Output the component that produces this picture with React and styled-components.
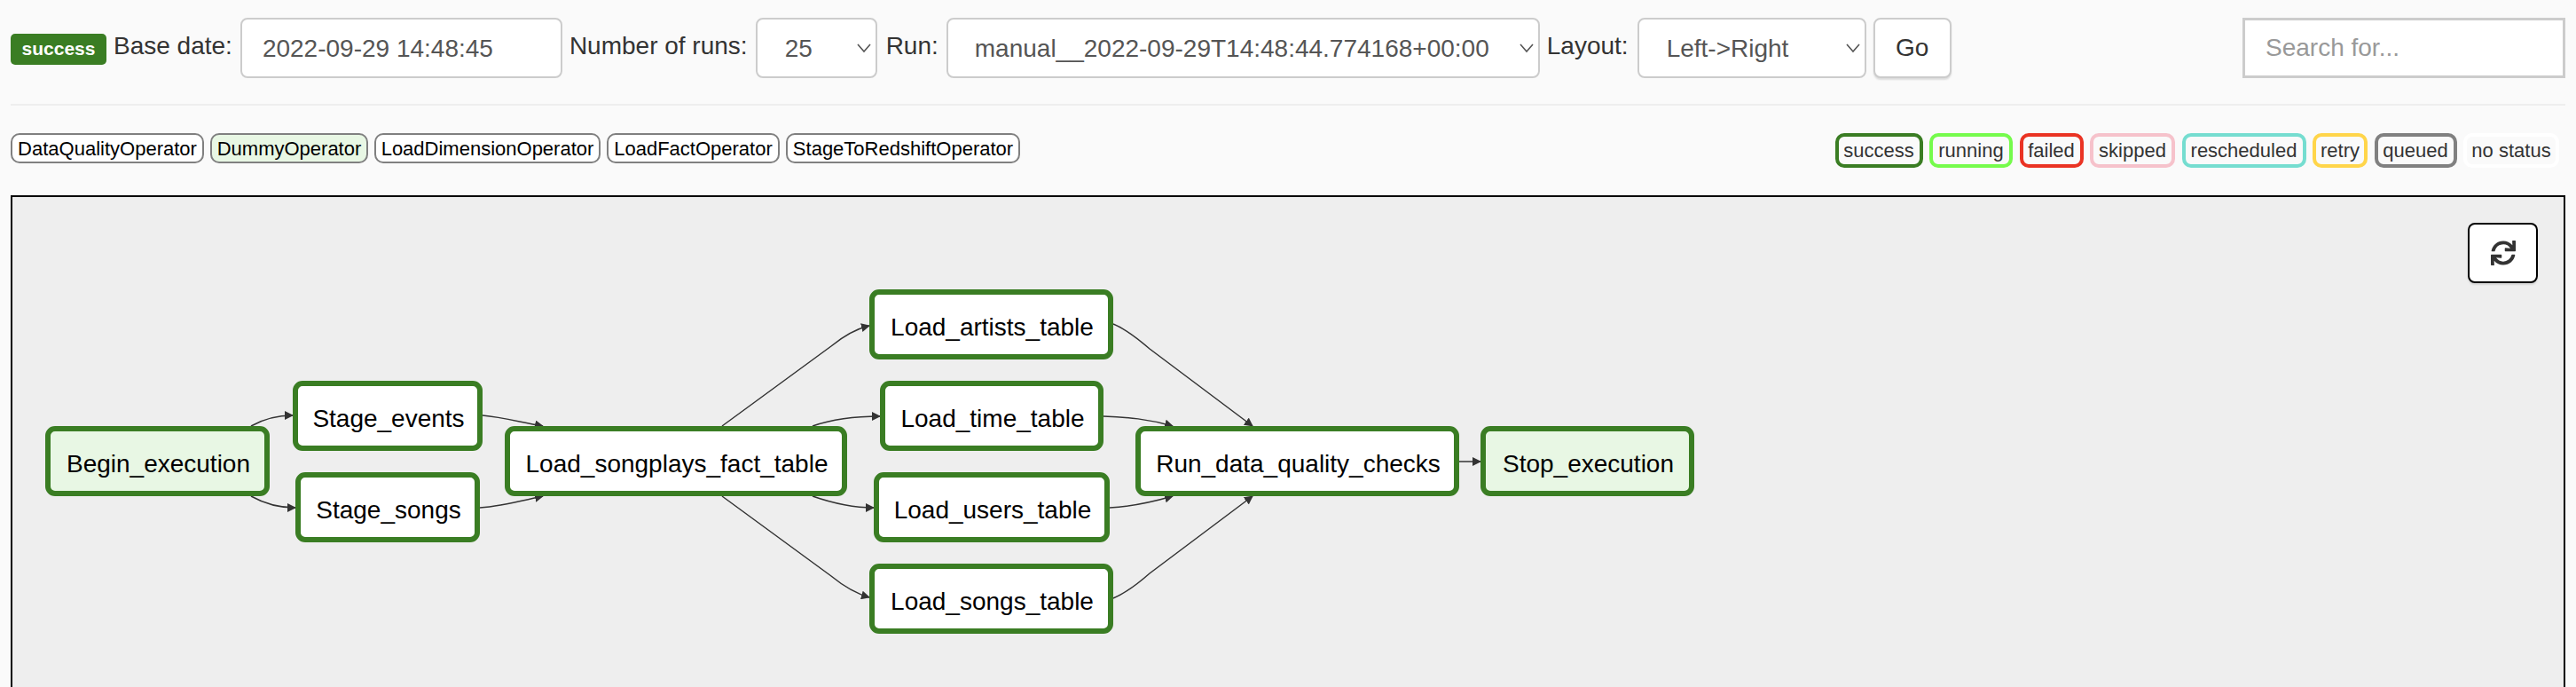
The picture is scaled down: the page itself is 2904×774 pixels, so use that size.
import React from "react";
import styled, { createGlobalStyle } from "styled-components";
import { FaSync } from "react-icons/fa";

const GREEN = "#3a7d23";

const operators = [
  { name: "DataQualityOperator", width: 218 },
  { name: "DummyOperator", width: 178, dummy: true },
  { name: "LoadDimensionOperator", width: 255 },
  { name: "LoadFactOperator", width: 195 },
  { name: "StageToRedshiftOperator", width: 264 }
];

const statuses = [
  { name: "success", color: GREEN, width: 99 },
  { name: "running", color: "#75fb4c", width: 94 },
  { name: "failed", color: "#ea3323", width: 72 },
  { name: "skipped", color: "#f6c2cb", width: 96 },
  { name: "rescheduled", color: "#75ddd0", width: 140 },
  { name: "retry", color: "#ffd54a", width: 62 },
  { name: "queued", color: "#808080", width: 93 },
  { name: "no status", color: "#ffffff", width: 108 }
];

// graph coordinates are relative to the panel's padding box (origin 14,222)
const tasks = [
  { name: "Begin_execution", x: 37, y: 258, w: 253, dummy: true },
  { name: "Stage_events", x: 316, y: 207, w: 214 },
  { name: "Stage_songs", x: 319, y: 310, w: 208 },
  { name: "Load_songplays_fact_table", x: 555, y: 258, w: 386 },
  { name: "Load_artists_table", x: 966, y: 104, w: 275 },
  { name: "Load_time_table", x: 978, y: 207, w: 252 },
  { name: "Load_users_table", x: 971, y: 310, w: 266 },
  { name: "Load_songs_table", x: 966, y: 413, w: 275 },
  { name: "Run_data_quality_checks", x: 1266, y: 258, w: 365 },
  { name: "Stop_execution", x: 1655, y: 258, w: 241, dummy: true }
];

const edges = [
  "M269 258 C285 249 302 246 316 246",
  "M269 337 C285 346 302 350 319 350",
  "M530 246 C552 248 570 253 598 258",
  "M527 350 C552 348 570 343 598 337",
  "M800 258 L923 168 Q945 150 966 145",
  "M902 258 C925 250 955 247 978 247",
  "M902 337 C925 345 950 350 971 350",
  "M800 337 L923 427 Q945 445 966 451",
  "M1241 143 Q1258 150 1282 171 L1398 258",
  "M1230 247 C1258 248 1280 250 1308 258",
  "M1237 350 C1258 349 1280 345 1308 337",
  "M1241 452 Q1258 445 1282 424 L1398 337",
  "M1631 298 L1655 298"
];

const GlobalStyle = createGlobalStyle`
  html, body {
    margin: 0;
    height: 100%;
    overflow: hidden;
    background: #fafafa;
    font-family: "Liberation Sans", Arial, sans-serif;
  }
`;

const Page = styled.div`
  height: 774px;
  padding: 20px 12px 0;
  box-sizing: border-box;
  overflow: hidden;
`;

const Toolbar = styled.form`
  display: flex;
  align-items: center;
  height: 68px;
`;

const StateBadge = styled.span`
  width: 108px;
  height: 35px;
  margin-top: 2px;
  margin-right: 8px;
  display: flex;
  align-items: center;
  justify-content: center;
  background: ${GREEN};
  color: #fff;
  border-radius: 5px;
  font-size: 21px;
  font-weight: bold;
`;

const Label = styled.label`
  color: #333;
  font-size: 28px;
  margin: 0 ${p => p.$gap || 9}px 4px 0;
  white-space: nowrap;
`;

const Field = styled.div`
  width: ${p => p.$width}px;
  height: 68px;
  box-sizing: border-box;
  margin-right: ${p => p.$after || 8}px;
  padding: 2px 0 0 ${p => p.$pad || 30}px;
  display: flex;
  align-items: center;
  position: relative;
  background: #fff;
  border: 2px solid #ccc;
  border-radius: 8px;
  color: #555;
  font-size: 28px;
  white-space: nowrap;
`;

const Chevron = styled.svg`
  position: absolute;
  right: 5px;
  top: 26px;
  width: 16px;
  height: 12px;
  fill: none;
  stroke: #555;
  stroke-width: 1.6;
`;

const GoButton = styled.button`
  width: 88px;
  height: 68px;
  box-sizing: border-box;
  background: #fff;
  border: 2px solid #ccc;
  border-radius: 8px;
  box-shadow: 0 2px 2px rgba(0, 0, 0, 0.12);
  color: #333;
  font: 28px "Liberation Sans", Arial, sans-serif;
  padding: 0;
`;

const SearchInput = styled.div`
  width: 364px;
  height: 68px;
  box-sizing: border-box;
  margin-left: auto;
  padding-left: 23px;
  display: flex;
  align-items: center;
  background: #fff;
  border: 3px solid #ccc;
  color: #999;
  font-size: 28px;
`;

const Rule = styled.hr`
  margin: 29px 0 31px;
  border: 0;
  border-top: 2px solid #eee;
`;

const LegendRow = styled.div`
  display: flex;
  justify-content: space-between;
  height: 70px;
  box-sizing: border-box;
`;

const ChipGroup = styled.div`
  display: flex;
  align-items: flex-start;
  gap: ${p => p.$gap}px;
  padding-right: ${p => p.$inset || 0}px;
`;

const OperatorChip = styled.span`
  width: ${p => p.$width}px;
  height: 34px;
  box-sizing: border-box;
  padding-top: 2px;
  display: flex;
  align-items: center;
  justify-content: center;
  background: ${p => (p.$dummy ? "#e8f7e4" : "#fff")};
  border: 2px solid #808080;
  border-radius: 10px;
  color: #000;
  font-size: 22px;
  white-space: nowrap;
`;

const StatusChip = styled.span`
  width: ${p => p.$width}px;
  height: 39px;
  box-sizing: border-box;
  display: flex;
  align-items: center;
  justify-content: center;
  border: 4px solid ${p => p.$color};
  border-radius: 10px;
  color: #333;
  font-size: 22px;
  white-space: nowrap;
`;

const GraphPanel = styled.div`
  position: relative;
  height: 600px;
  box-sizing: border-box;
  background: #eee;
  border: 2px solid #000;
`;

const RefreshButton = styled.button`
  position: absolute;
  top: 29px;
  right: 29px;
  width: 79px;
  height: 68px;
  box-sizing: border-box;
  display: flex;
  align-items: center;
  justify-content: center;
  background: #fff;
  border: 2px solid #000;
  border-radius: 8px;
  box-shadow: 0 2px 2px rgba(0, 0, 0, 0.1);
  color: #333;
  font-size: 28px;
  padding: 0;
`;

const EdgeLayer = styled.svg`
  position: absolute;
  left: 0;
  top: 0;
  width: 2000px;
  height: 560px;
`;

const TaskNode = styled.div`
  position: absolute;
  left: ${p => p.$x}px;
  top: ${p => p.$y}px;
  width: ${p => p.$w}px;
  height: 79px;
  box-sizing: border-box;
  padding: 6px 0 0 2px;
  display: flex;
  align-items: center;
  justify-content: center;
  background: ${p => (p.$dummy ? "#e8f7e4" : "#fff")};
  border: 6px solid ${GREEN};
  border-radius: 11px;
  color: #000;
  font-size: 28px;
  white-space: nowrap;
`;

const Select = ({ width, pad, after, children }) => (
  <Field $width={width} $pad={pad} $after={after}>
    {children}
    <Chevron viewBox="0 0 16 12">
      <path d="M1 2 L8 10 L15 2" />
    </Chevron>
  </Field>
);

const App = () => (
  <Page>
    <GlobalStyle />
    <Toolbar>
      <StateBadge>success</StateBadge>
      <Label>Base date:</Label>
      <Field $width={363} $pad={23}>2022-09-29 14:48:45</Field>
      <Label>Number of runs:</Label>
      <Select width={137} pad={31} after={10}>25</Select>
      <Label>Run:</Label>
      <Select width={669} pad={30}>manual__2022-09-29T14:48:44.774168+00:00</Select>
      <Label $gap={10}>Layout:</Label>
      <Select width={258} pad={31}>Left-&gt;Right</Select>
      <GoButton type="button">Go</GoButton>
      <SearchInput>Search for...</SearchInput>
    </Toolbar>
    <Rule />
    <LegendRow>
      <ChipGroup $gap={7}>
        {operators.map(op => (
          <OperatorChip key={op.name} $width={op.width} $dummy={op.dummy}>
            {op.name}
          </OperatorChip>
        ))}
      </ChipGroup>
      <ChipGroup $gap={7.5} $inset={7}>
        {statuses.map(s => (
          <StatusChip key={s.name} $width={s.width} $color={s.color}>
            {s.name}
          </StatusChip>
        ))}
      </ChipGroup>
    </LegendRow>
    <GraphPanel>
      <RefreshButton type="button">
        <FaSync />
      </RefreshButton>
      <EdgeLayer viewBox="0 0 2000 560">
        <defs>
          <marker id="arrow" viewBox="0 0 10 10" refX="9" refY="5" markerWidth="10" markerHeight="10" orient="auto" markerUnits="userSpaceOnUse">
            <path d="M0 0 L10 5 L0 10 z" fill="#333" />
          </marker>
        </defs>
        {edges.map(d => (
          <path key={d} d={d} fill="none" stroke="#333" strokeWidth="1.5" markerEnd="url(#arrow)" />
        ))}
      </EdgeLayer>
      {tasks.map(t => (
        <TaskNode key={t.name} $x={t.x} $y={t.y} $w={t.w} $dummy={t.dummy}>
          {t.name}
        </TaskNode>
      ))}
    </GraphPanel>
  </Page>
);

export default App;
